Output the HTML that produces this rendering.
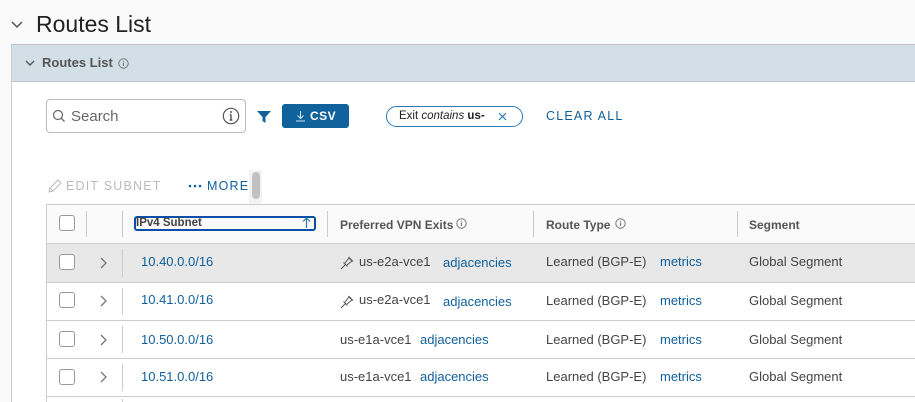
<!DOCTYPE html>
<html><head><meta charset="utf-8"><style>
*{box-sizing:border-box;margin:0;padding:0}
body{width:915px;height:402px;overflow:hidden;background:#fafafa;font-family:"Liberation Sans",sans-serif;position:relative;color:#333}
.a{position:absolute;white-space:nowrap}
.cb{position:absolute;width:16px;height:16px;border:1px solid #999;border-radius:3px;background:#fff}
.hl{position:absolute;height:1px;background:#ccc}
.vl{position:absolute;width:1px;background:#ccc}
.th{font-size:12px;font-weight:bold;color:#555}
.td{font-size:13px;color:#444}
.td.link,.link{color:#0f5f9c}
</style></head><body>
<svg class="a" style="left:11px;top:20px" width="12" height="10" viewBox="0 0 12 10"><path d="M1 2 L6 7 L11 2" fill="none" stroke="#555" stroke-width="1.5"/></svg>
<div class="a" style="left:36px;top:11px;font-size:23px;color:#222">Routes List</div>
<div class="a" style="left:11px;top:44px;width:904px;height:358px;background:#fff;border-left:1px solid #ccc;border-top:1px solid #c4c8cc"></div>
<div class="a" style="left:11px;top:44px;width:904px;height:38px;background:#d3dfe7;border-bottom:1px solid #c0c4c8;border-left:1px solid #ccc;border-top:1px solid #bfc3c7"></div>
<svg class="a" style="left:25px;top:59px" width="10" height="8" viewBox="0 0 10 8"><path d="M1 2 L5 6 L9 2" fill="none" stroke="#555" stroke-width="1.4"/></svg>
<div class="a" style="left:42px;top:55px;font-size:13px;font-weight:bold;color:#555">Routes List</div>
<svg class="a" style="left:118px;top:58px" width="11" height="11" viewBox="0 0 11 11"><circle cx="5.5" cy="5.5" r="4.7" fill="none" stroke="#777" stroke-width="1"/><path d="M5.5 4.5v3.5M5.5 2.8v.8" stroke="#777" stroke-width="1.2"/></svg>
<div class="a" style="left:46px;top:99px;width:200px;height:34px;border:1px solid #bbb;border-radius:4px;background:#fff"></div>
<svg class="a" style="left:52px;top:109px" width="14" height="14" viewBox="0 0 14 14"><circle cx="6" cy="6" r="4.5" fill="none" stroke="#666" stroke-width="1.2"/><path d="M9.3 9.3 L12.5 12.5" stroke="#666" stroke-width="1.3"/></svg>
<div class="a" style="left:71px;top:108px;font-size:15px;color:#666">Search</div>
<svg class="a" style="left:222px;top:107px" width="18" height="18" viewBox="0 0 18 18"><circle cx="9" cy="9" r="7.7" fill="none" stroke="#555" stroke-width="1.2"/><path d="M9 7.5v5.5M7.6 13h2.8M7.8 7.5H9" stroke="#555" stroke-width="1.4"/><circle cx="9" cy="5" r="1" fill="#555"/></svg>
<svg class="a" style="left:256px;top:110px" width="16" height="14" viewBox="0 0 16 14"><path d="M1 1 H15 L9.5 7 V13 L6.5 11 V7 Z" fill="#0f5f9c"/></svg>
<div class="a" style="left:282px;top:104px;width:67px;height:24px;background:#0f629b;border-radius:3px"></div>
<svg class="a" style="left:295px;top:110px" width="11" height="12" viewBox="0 0 11 12"><path d="M5.5 1v7M2.5 5.5l3 3 3-3M1 11h9" fill="none" stroke="#cfe1ee" stroke-width="1.1"/></svg>
<div class="a" style="left:310px;top:109px;font-size:12px;font-weight:bold;color:#fff;letter-spacing:.5px">CSV</div>
<div class="a" style="left:386px;top:106px;width:137px;height:21px;border:1px solid #2b7ab8;border-radius:11px;background:#fff"></div>
<div class="a" style="left:399px;top:110px;font-size:11.5px;color:#222">Exit <i>contains</i> <b>us-</b></div>
<svg class="a" style="left:498px;top:112px" width="9" height="9" viewBox="0 0 9 9"><path d="M1 1L8 8M8 1L1 8" stroke="#2b7ab8" stroke-width="1.2"/></svg>
<div class="a" style="left:546px;top:109px;font-size:12.5px;color:#0f5f9c;letter-spacing:1.2px">CLEAR ALL</div>
<svg class="a" style="left:47px;top:178px" width="16" height="16" viewBox="0 0 16 16"><path d="M2 14 L3 10 L11 2 L14 5 L6 13 Z M3 10 L6 13" fill="none" stroke="#bbb" stroke-width="1"/></svg>
<div class="a" style="left:66px;top:179px;font-size:12.5px;color:#bbb;letter-spacing:1.2px">EDIT SUBNET</div>
<svg class="a" style="left:188px;top:184px" width="16" height="4" viewBox="0 0 16 4"><circle cx="2" cy="2" r="1.3" fill="#0f5f9c"/><circle cx="7" cy="2" r="1.3" fill="#0f5f9c"/><circle cx="12" cy="2" r="1.3" fill="#0f5f9c"/></svg>
<div class="a" style="left:207px;top:179px;font-size:12.5px;color:#0f5f9c;letter-spacing:1.2px">MORE</div>
<div class="a" style="left:249px;top:170px;width:13px;height:34px;background:#f3f3f3"></div>
<div class="a" style="left:252px;top:172px;width:8px;height:27px;background:#c1c1c1;border-radius:4px"></div>
<!-- table -->
<div class="a" style="left:46px;top:204px;width:869px;height:198px;border-left:1px solid #ccc;border-top:1px solid #ccc;background:#fff"></div>
<div class="a" style="left:47px;top:205px;width:868px;height:38px;background:#fafafa"></div>
<div class="a" style="left:47px;top:244px;width:868px;height:38px;background:#e8e8e8"></div>
<div class="hl" style="left:47px;top:243px;width:868px"></div>
<div class="hl" style="left:47px;top:282px;width:868px"></div>
<div class="hl" style="left:47px;top:320px;width:868px"></div>
<div class="hl" style="left:47px;top:358px;width:868px"></div>
<div class="hl" style="left:47px;top:396px;width:868px"></div>
<div class="vl" style="left:86px;top:211px;height:26px"></div>
<div class="vl" style="left:122px;top:211px;height:26px"></div>
<div class="vl" style="left:327px;top:211px;height:26px"></div>
<div class="vl" style="left:533px;top:211px;height:26px"></div>
<div class="vl" style="left:737px;top:211px;height:26px"></div>
<div class="vl" style="left:122px;top:249px;height:28px"></div>
<div class="vl" style="left:122px;top:288px;height:27px"></div>
<div class="vl" style="left:122px;top:326px;height:27px"></div>
<div class="vl" style="left:122px;top:364px;height:27px"></div>
<div class="vl" style="left:122px;top:399px;height:3px"></div>
<div class="cb" style="left:59px;top:215px"></div>
<div class="a" style="left:134px;top:216px;width:182px;height:15px;border:2px solid #0a4fa5;border-radius:3px"></div>
<div class="a th" style="left:136px;top:217px;color:#444;font-size:11.5px">IPv4 Subnet</div>
<svg class="a" style="left:302px;top:217px" width="9" height="11" viewBox="0 0 9 11"><path d="M4.5 1v10M1 4.5l3.5-3.5 3.5 3.5" fill="none" stroke="#2b7ab8" stroke-width="1.2"/></svg>
<div class="a th" style="left:340px;top:218px">Preferred VPN Exits</div>
<svg class="a" style="left:456px;top:218px" width="11" height="11" viewBox="0 0 11 11"><circle cx="5.5" cy="5.5" r="4.7" fill="none" stroke="#777"/><path d="M5.5 4.5v3.5M5.5 2.8v.8" stroke="#777" stroke-width="1.2"/></svg>
<div class="a th" style="left:546px;top:218px">Route Type</div>
<svg class="a" style="left:615px;top:218px" width="11" height="11" viewBox="0 0 11 11"><circle cx="5.5" cy="5.5" r="4.7" fill="none" stroke="#777"/><path d="M5.5 4.5v3.5M5.5 2.8v.8" stroke="#777" stroke-width="1.2"/></svg>
<div class="a th" style="left:749px;top:218px">Segment</div>

<div class="cb" style="left:59px;top:254px"></div>
<svg class="a" style="left:100px;top:257px" width="7" height="12" viewBox="0 0 7 12"><path d="M1 1L6 6L1 11" fill="none" stroke="#777" stroke-width="1.3"/></svg>
<div class="a td link" style="left:141px;top:254px">10.40.0.0/16</div>
<svg class="a" style="left:340px;top:255px" width="15" height="15" viewBox="0 0 15 15"><path d="M1 14 L5.5 9.5 M3.5 7.5 L7.5 11.5 M5 8 L9 3 L12 6 L7 10 M8.5 2 L13 6.5" fill="none" stroke="#555" stroke-width="1"/></svg>
<div class="a td" style="left:359px;top:254px">us-e2a-vce1</div>
<div class="a td link" style="left:443px;top:255px">adjacencies</div>
<div class="a td" style="left:546px;top:254px">Learned (BGP-E)</div>
<div class="a td link" style="left:660px;top:254px">metrics</div>
<div class="a td" style="left:749px;top:254px">Global Segment</div>

<div class="cb" style="left:59px;top:292px"></div>
<svg class="a" style="left:100px;top:295px" width="7" height="12" viewBox="0 0 7 12"><path d="M1 1L6 6L1 11" fill="none" stroke="#777" stroke-width="1.3"/></svg>
<div class="a td link" style="left:141px;top:292px">10.41.0.0/16</div>
<svg class="a" style="left:340px;top:294px" width="15" height="15" viewBox="0 0 15 15"><path d="M1 14 L5.5 9.5 M3.5 7.5 L7.5 11.5 M5 8 L9 3 L12 6 L7 10 M8.5 2 L13 6.5" fill="none" stroke="#555" stroke-width="1"/></svg>
<div class="a td" style="left:359px;top:292px">us-e2a-vce1</div>
<div class="a td link" style="left:443px;top:294px">adjacencies</div>
<div class="a td" style="left:546px;top:293px">Learned (BGP-E)</div>
<div class="a td link" style="left:660px;top:293px">metrics</div>
<div class="a td" style="left:749px;top:293px">Global Segment</div>

<div class="cb" style="left:59px;top:331px"></div>
<svg class="a" style="left:100px;top:334px" width="7" height="12" viewBox="0 0 7 12"><path d="M1 1L6 6L1 11" fill="none" stroke="#777" stroke-width="1.3"/></svg>
<div class="a td link" style="left:141px;top:332px">10.50.0.0/16</div>
<div class="a td" style="left:340px;top:332px">us-e1a-vce1</div>
<div class="a td link" style="left:420px;top:332px">adjacencies</div>
<div class="a td" style="left:546px;top:332px">Learned (BGP-E)</div>
<div class="a td link" style="left:660px;top:332px">metrics</div>
<div class="a td" style="left:749px;top:332px">Global Segment</div>

<div class="cb" style="left:59px;top:369px"></div>
<svg class="a" style="left:100px;top:371px" width="7" height="12" viewBox="0 0 7 12"><path d="M1 1L6 6L1 11" fill="none" stroke="#777" stroke-width="1.3"/></svg>
<div class="a td link" style="left:141px;top:369px">10.51.0.0/16</div>
<div class="a td" style="left:340px;top:369px">us-e1a-vce1</div>
<div class="a td link" style="left:420px;top:369px">adjacencies</div>
<div class="a td" style="left:546px;top:369px">Learned (BGP-E)</div>
<div class="a td link" style="left:660px;top:369px">metrics</div>
<div class="a td" style="left:749px;top:369px">Global Segment</div>
</body></html>
